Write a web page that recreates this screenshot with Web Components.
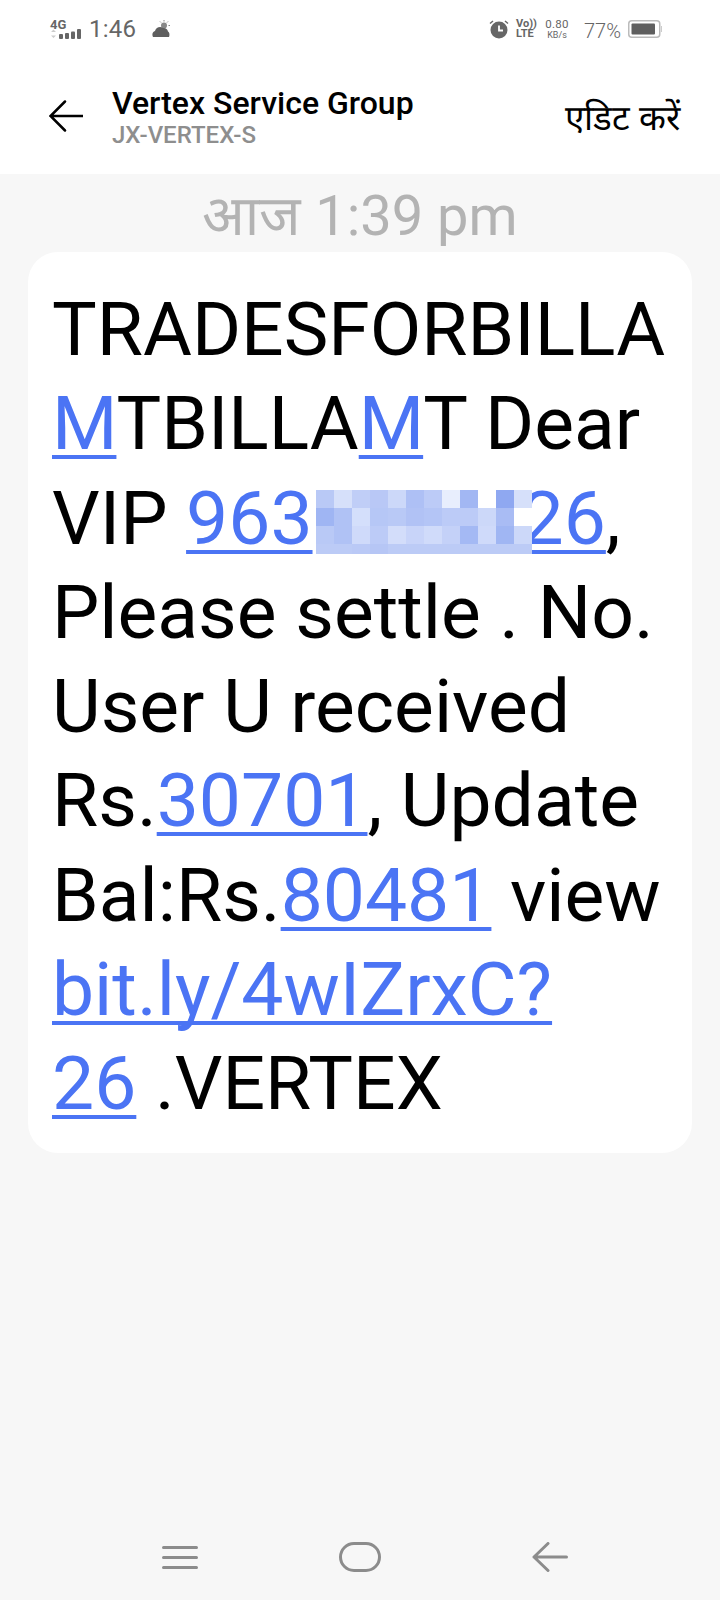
<!DOCTYPE html>
<html lang="hi">
<head>
<meta charset="utf-8">
<title>Vertex Service Group</title>
<style>
  html, body { margin: 0; padding: 0; }
  body {
    width: 720px;
    height: 1600px;
    background: #f7f7f7;
    display: flex;
    flex-direction: column;
    font-family: Roboto, "Noto Sans", sans-serif;
    overflow: hidden;
  }
</style>
</head>
<body>
  <status-bar></status-bar>
  <convo-header title="Vertex Service Group" sender="JX-VERTEX-S" action="एडिट करें"></convo-header>
  <time-stamp>आज 1:39 pm</time-stamp>
  <message-bubble>TRADESFORBILLA<br><msg-link>M</msg-link>TBILLA<msg-link>M</msg-link>T Dear<br>VIP <msg-link>963<mosaic-block></mosaic-block>26</msg-link>,<br>Please settle . No.<br>User U received<br>Rs.<msg-link>30701</msg-link>, Update<br>Bal:Rs.<msg-link>80481</msg-link> view<br><msg-link>bit.ly/4wIZrxC?</msg-link><br><msg-link>26</msg-link> .VERTEX</message-bubble>
  <nav-bar></nav-bar>

<script>
class StatusBar extends HTMLElement {
  connectedCallback() {
    this.attachShadow({ mode: 'open' });
    this.shadowRoot.innerHTML = `
      <style>
        :host {
          display: flex;
          align-items: center;
          height: 58px;
          padding: 0 58px 0 50px;
          background: #fff;
          color: #666;
          font-family: Roboto, sans-serif;
        }
        .net { display: flex; flex-direction: column; width: 33px; height: 20px; position: relative; margin-top: -1px; }
        .net b { font-size: 13px; line-height: 11px; font-weight: 700; }
        .net svg { position: absolute; left: 0; bottom: 0; }
        .time { font-size: 24px; margin-left: 6px; letter-spacing: .2px; }
        .cloud { margin-left: 16px; }
        .spacer { flex: 1; }
        .volte { display: flex; flex-direction: column; margin-left: 7px; font-size: 11px; line-height: 10px; font-weight: 700; width: 18px; }
        .speed { display: flex; flex-direction: column; align-items: center; margin-left: 10px; width: 26px; }
        .speed span:first-child { font-size: 11.500px; line-height: 11px; letter-spacing: .3px; }
        .speed span:last-child { font-size: 9px; line-height: 10px; }
        .pct { font-size: 20px; font-weight: 300; margin-left: 14px; margin-top: 3px; }
        .batt { margin-left: 7px; }
      </style>
      <div class="net">
        <b>4G</b>
        <svg width="33" height="10" viewBox="0 0 33 10">
          <path d="M1 3 3.500 0.500 6 3zM1 6.500 3.500 9 6 6.500z" fill="#ccc"/>
          <g fill="#666">
            <rect x="9" y="5" width="4" height="5" rx="1"/>
            <rect x="15" y="4" width="4" height="6" rx="1"/>
            <rect x="21" y="2.500" width="4" height="7.500" rx="1"/>
            <rect x="27" y="0" width="4" height="10" rx="1"/>
          </g>
        </svg>
      </div>
      <span class="time">1:46</span>
      <svg class="cloud" width="18" height="18" viewBox="0 0 18 18">
        <circle cx="12" cy="5.500" r="3" fill="#888"/>
        <path d="M12 0v1.500M16 1.500 15 2.500M18 5.500h-1.500M8 1.500 9 2.500" stroke="#888" stroke-width="1"/>
        <path d="M1 17C-.5 14 1 11.500 3 11 4 7.500 8 6 11 8c2.500-.5 4.500 1 5 3.500 1.500.5 1.800 3.500 1 5.500z" fill="#5f5f5f"/>
      </svg>
      <div class="spacer"></div>
      <svg width="20" height="20" viewBox="0 0 20 20">
        <circle cx="10" cy="11" r="8.500" fill="#666"/>
        <path d="M1 4.500 4 2M19 4.500 16 2" stroke="#666" stroke-width="1.500"/>
        <path d="M10 6.500V11.500H14" fill="none" stroke="#fff" stroke-width="1.800"/>
      </svg>
      <div class="volte"><span>Vo))</span><span>LTE</span></div>
      <div class="speed"><span>0.80</span><span>KB/s</span></div>
      <span class="pct">77%</span>
      <svg class="batt" width="34" height="18" viewBox="0 0 34 18">
        <rect x=".75" y=".75" width="31" height="16.500" rx="3" fill="none" stroke="#bbb" stroke-width="1.500"/>
        <rect x="3.500" y="3.500" width="23.500" height="11" rx="1" fill="#5f5f5f"/>
        <rect x="33" y="6" width="1" height="6" fill="#ccc"/>
      </svg>
    `;
  }
}

class ConvoHeader extends HTMLElement {
  connectedCallback() {
    this.attachShadow({ mode: 'open' });
    this.shadowRoot.innerHTML = `
      <style>
        :host {
          display: flex;
          align-items: center;
          height: 116px;
          padding: 0 40px 0 49px;
          background: #fff;
          font-family: Roboto, sans-serif;
        }
        svg { flex: none; margin-right: 29px; }
        .who { flex: 1; display: flex; flex-direction: column; }
        .title { font-size: 32px; line-height: 38px; font-weight: 500; color: #000; }
        .sender { font-size: 24px; line-height: 27px; font-weight: 500; color: #8e8e8e; }
        .action { font-size: 35px; color: #000; }
      </style>
      <svg width="34" height="32" viewBox="0 0 34 32">
        <path d="M16 1.500 1.500 16 16 30.500M1.500 16H34" fill="none" stroke="#000" stroke-width="2.500" stroke-linecap="round"/>
      </svg>
      <div class="who">
        <span class="title">${this.getAttribute('title')}</span>
        <span class="sender">${this.getAttribute('sender')}</span>
      </div>
      <span class="action">${this.getAttribute('action')}</span>
    `;
  }
}

class TimeStamp extends HTMLElement {
  connectedCallback() {
    this.attachShadow({ mode: 'open' });
    this.shadowRoot.innerHTML = `
      <style>
        :host {
          display: block;
          height: 78px;
          text-align: center;
          font-family: Roboto, sans-serif;
          font-size: 56px;
          line-height: 84px;
          color: #b3b3b3;
        }
      </style>
      <slot></slot>
    `;
  }
}

class MessageBubble extends HTMLElement {
  connectedCallback() {
    this.attachShadow({ mode: 'open' });
    this.shadowRoot.innerHTML = `
      <style>
        :host {
          display: block;
          margin: 0 28px;
          padding: 30px 24px 22px;
          background: #fff;
          border-radius: 30px;
          font-family: Roboto, sans-serif;
          font-size: 75px;
          line-height: 94.300px;
          color: #000;
          white-space: nowrap;
        }
      </style>
      <slot></slot>
    `;
  }
}

class MsgLink extends HTMLElement {
  connectedCallback() {
    this.attachShadow({ mode: 'open' });
    // no whitespace between the nodes: this element sits inside running text
    this.shadowRoot.innerHTML = `<style>
        :host { display: inline; color: #4b74f4; }
        span {
          text-decoration: underline;
          text-decoration-thickness: 4px;
          text-underline-offset: 6px;
          text-decoration-skip-ink: none;
        }
      </style><span><slot></slot></span>`;
  }
}

// Pixelated patch hiding part of the phone number
const MOSAIC = [
  ['#b9c9f6', '#d6e0fa', '#c0cef7', '#b9c8f6', '#ccd8f9', '#aec0f5', '#bccbf7', '#e8eefd', '#a2b7f3', '#ffffff', '#8fa8f1', '#d6e0fa'],
  ['#9fb5f3', '#b0c2f5', '#d4dffb', '#b6c7f6', '#b9c9f6', '#b1c2f5', '#b4c5f6', '#bccbf7', '#bccbf7', '#ccd8f9', '#a9bcf4', '#ffffff'],
  ['#b9c9f6', '#b0c2f5', '#cfdafa', '#bccbf7', '#d3ddfa', '#c8d4f9', '#d0dbfa', '#c4d1f8', '#a4b9f4', '#cfdafa', '#a0b6f3', '#ccd8f9'],
  ['#bccbf6', '#bccbf6', '#bac9f6', '#b6c6f5', '#bccbf6', '#bccbf6', '#bccbf6', '#bccbf6', '#bccbf6', '#bccbf6', '#bccbf6', '#bccbf6'],
];

class MosaicBlock extends HTMLElement {
  connectedCallback() {
    this.attachShadow({ mode: 'open' });
    const cells = MOSAIC.flat().map(c => `<i style="background:${c}"></i>`).join('');
    // sits over the edge of the digit after it, hence the negative margin
    this.shadowRoot.innerHTML = `<style>
        :host {
          display: inline-block;
          overflow: hidden;
          position: relative;
          z-index: 1;
          margin: 0 -10px 0 3px;
          vertical-align: -10px;
          line-height: 0;
        }
        div {
          display: grid;
          grid-template-columns: repeat(12, 18px);
          grid-template-rows: 18px 18px 18px 10px;
        }
      </style><div>${cells}</div>`;
  }
}

class NavBar extends HTMLElement {
  connectedCallback() {
    this.attachShadow({ mode: 'open' });
    this.shadowRoot.innerHTML = `
      <style>
        :host {
          display: flex;
          justify-content: space-between;
          align-items: center;
          margin-top: auto;
          height: 86px;
          padding: 0 152px 0 162px;
          box-sizing: border-box;
        }
        svg { display: block; }
        .home { margin-right: 11px; }
      </style>
      <svg width="36" height="24" viewBox="0 0 36 24">
        <path d="M1.500 2.500H34.500M1.500 12.500H34.500M1.500 22.500H34.500" stroke="#8c8c8c" stroke-width="3" stroke-linecap="round"/>
      </svg>
      <svg class="home" width="42" height="30" viewBox="0 0 42 30">
        <rect x="1.500" y="1.500" width="39" height="27" rx="13.500" fill="none" stroke="#8c8c8c" stroke-width="3"/>
      </svg>
      <svg width="36" height="30" viewBox="0 0 36 30">
        <path d="M16 1.500 2 15 16 28.500M2 15H34.500" fill="none" stroke="#8c8c8c" stroke-width="3" stroke-linecap="round" stroke-linejoin="round"/>
      </svg>
    `;
  }
}

customElements.define('status-bar', StatusBar);
customElements.define('convo-header', ConvoHeader);
customElements.define('time-stamp', TimeStamp);
customElements.define('message-bubble', MessageBubble);
customElements.define('msg-link', MsgLink);
customElements.define('mosaic-block', MosaicBlock);
customElements.define('nav-bar', NavBar);
</script>
</body>
</html>
